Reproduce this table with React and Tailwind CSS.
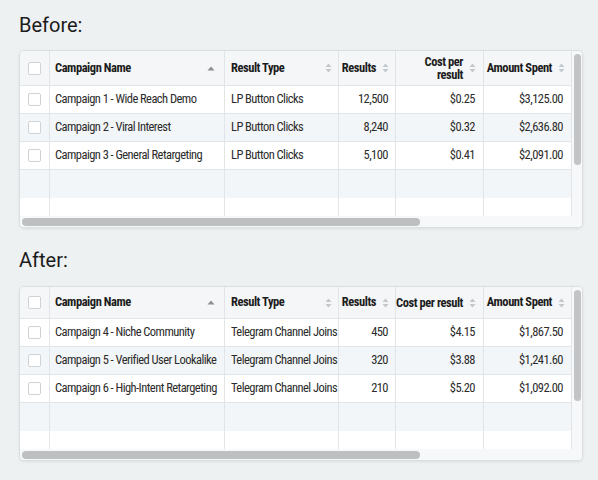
import React from 'react';

const GRID = 'grid grid-cols-[30px_175px_114px_57px_88px_88px]';
const NARROW = "font-['Roboto',sans-serif] font-stretch-[75%]";

const beforeRows = [
  ['Campaign 1 - Wide Reach Demo', 'LP Button Clicks', '12,500', '$0.25', '$3,125.00'],
  ['Campaign 2 - Viral Interest', 'LP Button Clicks', '8,240', '$0.32', '$2,636.80'],
  ['Campaign 3 - General Retargeting', 'LP Button Clicks', '5,100', '$0.41', '$2,091.00'],
];

const afterRows = [
  ['Campaign 4 - Niche Community', 'Telegram Channel Joins', '450', '$4.15', '$1,867.50'],
  ['Campaign 5 - Verified User Lookalike', 'Telegram Channel Joins', '320', '$3.88', '$1,241.60'],
  ['Campaign 6 - High-Intent Retargeting', 'Telegram Channel Joins', '210', '$5.20', '$1,092.00'],
];

// little up/down arrows next to the column names
const SortBoth = () => (
  <svg width="7" height="10" viewBox="0 0 7 10" className="shrink-0">
    <path d="M3.5 0.5 L6.5 4 L0.5 4 Z" fill="#c3c8cc" />
    <path d="M3.5 9.5 L6.5 6 L0.5 6 Z" fill="#c3c8cc" />
  </svg>
);

const SortUp = () => (
  <svg width="8" height="5" viewBox="0 0 8 5" className="shrink-0">
    <path d="M4 0.5 L7.5 4.5 L0.5 4.5 Z" fill="#8a8f93" />
  </svg>
);

const Checkbox = () => (
  <div className="h-[13px] w-[13px] rounded-[2px] border border-[#cfd3d6] bg-white" />
);

const DataTable = ({ rows, headerHeight, costLabel }) => {
  const cell = 'border-r border-[#e1e5e8] flex items-center';
  return (
    <div className="flex overflow-hidden rounded-[5px] border border-[#dadfe2] bg-white shadow-[0_1px_3px_rgba(0,0,0,0.08)]">
      <div className="flex flex-col">
        {/* header */}
        <div
          className={`${GRID} border-b border-[#e1e5e8] bg-[#f4f6f7] text-[12.5px] font-bold tracking-[-0.45px] text-[#1c1c1c] ${NARROW}`}
          style={{ height: headerHeight }}
        >
          <div className={`${cell} justify-center`}>
            <Checkbox />
          </div>
          <div className={`${cell} justify-between pl-[5px] pr-[9px]`}>
            <span>Campaign Name</span>
            <SortUp />
          </div>
          <div className={`${cell} justify-between pl-[6px] pr-[6px]`}>
            <span>Result Type</span>
            <SortBoth />
          </div>
          <div className={`${cell} justify-end gap-[6px] pr-[6px]`}>
            <span>Results</span>
            <SortBoth />
          </div>
          <div className={`${cell} justify-end gap-[6px] pr-[7px]`}>
            <span className="text-right leading-[13px] whitespace-nowrap">{costLabel}</span>
            <SortBoth />
          </div>
          <div className={`${cell} justify-end gap-[6px] pr-[6px]`}>
            <span className="whitespace-nowrap">Amount Spent</span>
            <SortBoth />
          </div>
        </div>

        {/* rows */}
        {rows.map((r, i) => (
          <div
            key={i}
            className={`${GRID} h-[28px] border-b border-[#e1e5e8] text-[12.5px] tracking-[-0.55px] text-[#2b2b2b] ${NARROW} ${
              i % 2 === 1 ? 'bg-[#f3f6f8]' : 'bg-white'
            }`}
          >
            <div className={`${cell} justify-center`}>
              <Checkbox />
            </div>
            <div className={`${cell} pl-[5px] whitespace-nowrap`}>{r[0]}</div>
            <div className={`${cell} pl-[6px] whitespace-nowrap`}>{r[1]}</div>
            <div className={`${cell} justify-end pr-[7px]`}>{r[2]}</div>
            <div className={`${cell} justify-end pr-[8px]`}>{r[3]}</div>
            <div className={`${cell} justify-end pr-[8px]`}>{r[4]}</div>
          </div>
        ))}

        {/* empty filler rows */}
        <div className={`${GRID} h-[28px] bg-[#f3f6f8]`}>
          {[0, 1, 2, 3, 4, 5].map((k) => (
            <div key={k} className="border-r border-[#e1e5e8]" />
          ))}
        </div>
        <div className={`${GRID} h-[18px] bg-white`}>
          {[0, 1, 2, 3, 4, 5].map((k) => (
            <div key={k} className="border-r border-[#e1e5e8]" />
          ))}
        </div>

        {/* horizontal scrollbar */}
        <div className="flex h-[11px] items-center bg-[#f7f8f9] px-[2px]">
          <div className="h-[8px] w-[398px] rounded-full bg-[#bdbfc1]" />
        </div>
      </div>

      {/* vertical scrollbar */}
      <div className="flex w-[12px] flex-col items-center bg-[#f7f8f9] pt-[3px]">
        <div className="h-[111px] w-[7px] rounded-full bg-[#c2c4c6]" />
      </div>
    </div>
  );
};

const App = () => {
  return (
    <div className="min-h-[480px] w-[598px] bg-[#eef1f2] px-[19px] pt-[13px] font-['Roboto',sans-serif]">
      <h2 className="h-[24px] text-[20px] leading-[24px] text-[#1b1b1b]">Before:</h2>
      <div className="mt-[13px] w-[564px]">
        <DataTable
          rows={beforeRows}
          headerHeight={35}
          costLabel={
            <>
              Cost per
              <br />
              result
            </>
          }
        />
      </div>

      <h2 className="mt-[20px] h-[24px] text-[20px] leading-[24px] text-[#1b1b1b]">After:</h2>
      <div className="mt-[14px] w-[564px]">
        <DataTable rows={afterRows} headerHeight={32} costLabel="Cost per result" />
      </div>
    </div>
  );
};

export default App;
